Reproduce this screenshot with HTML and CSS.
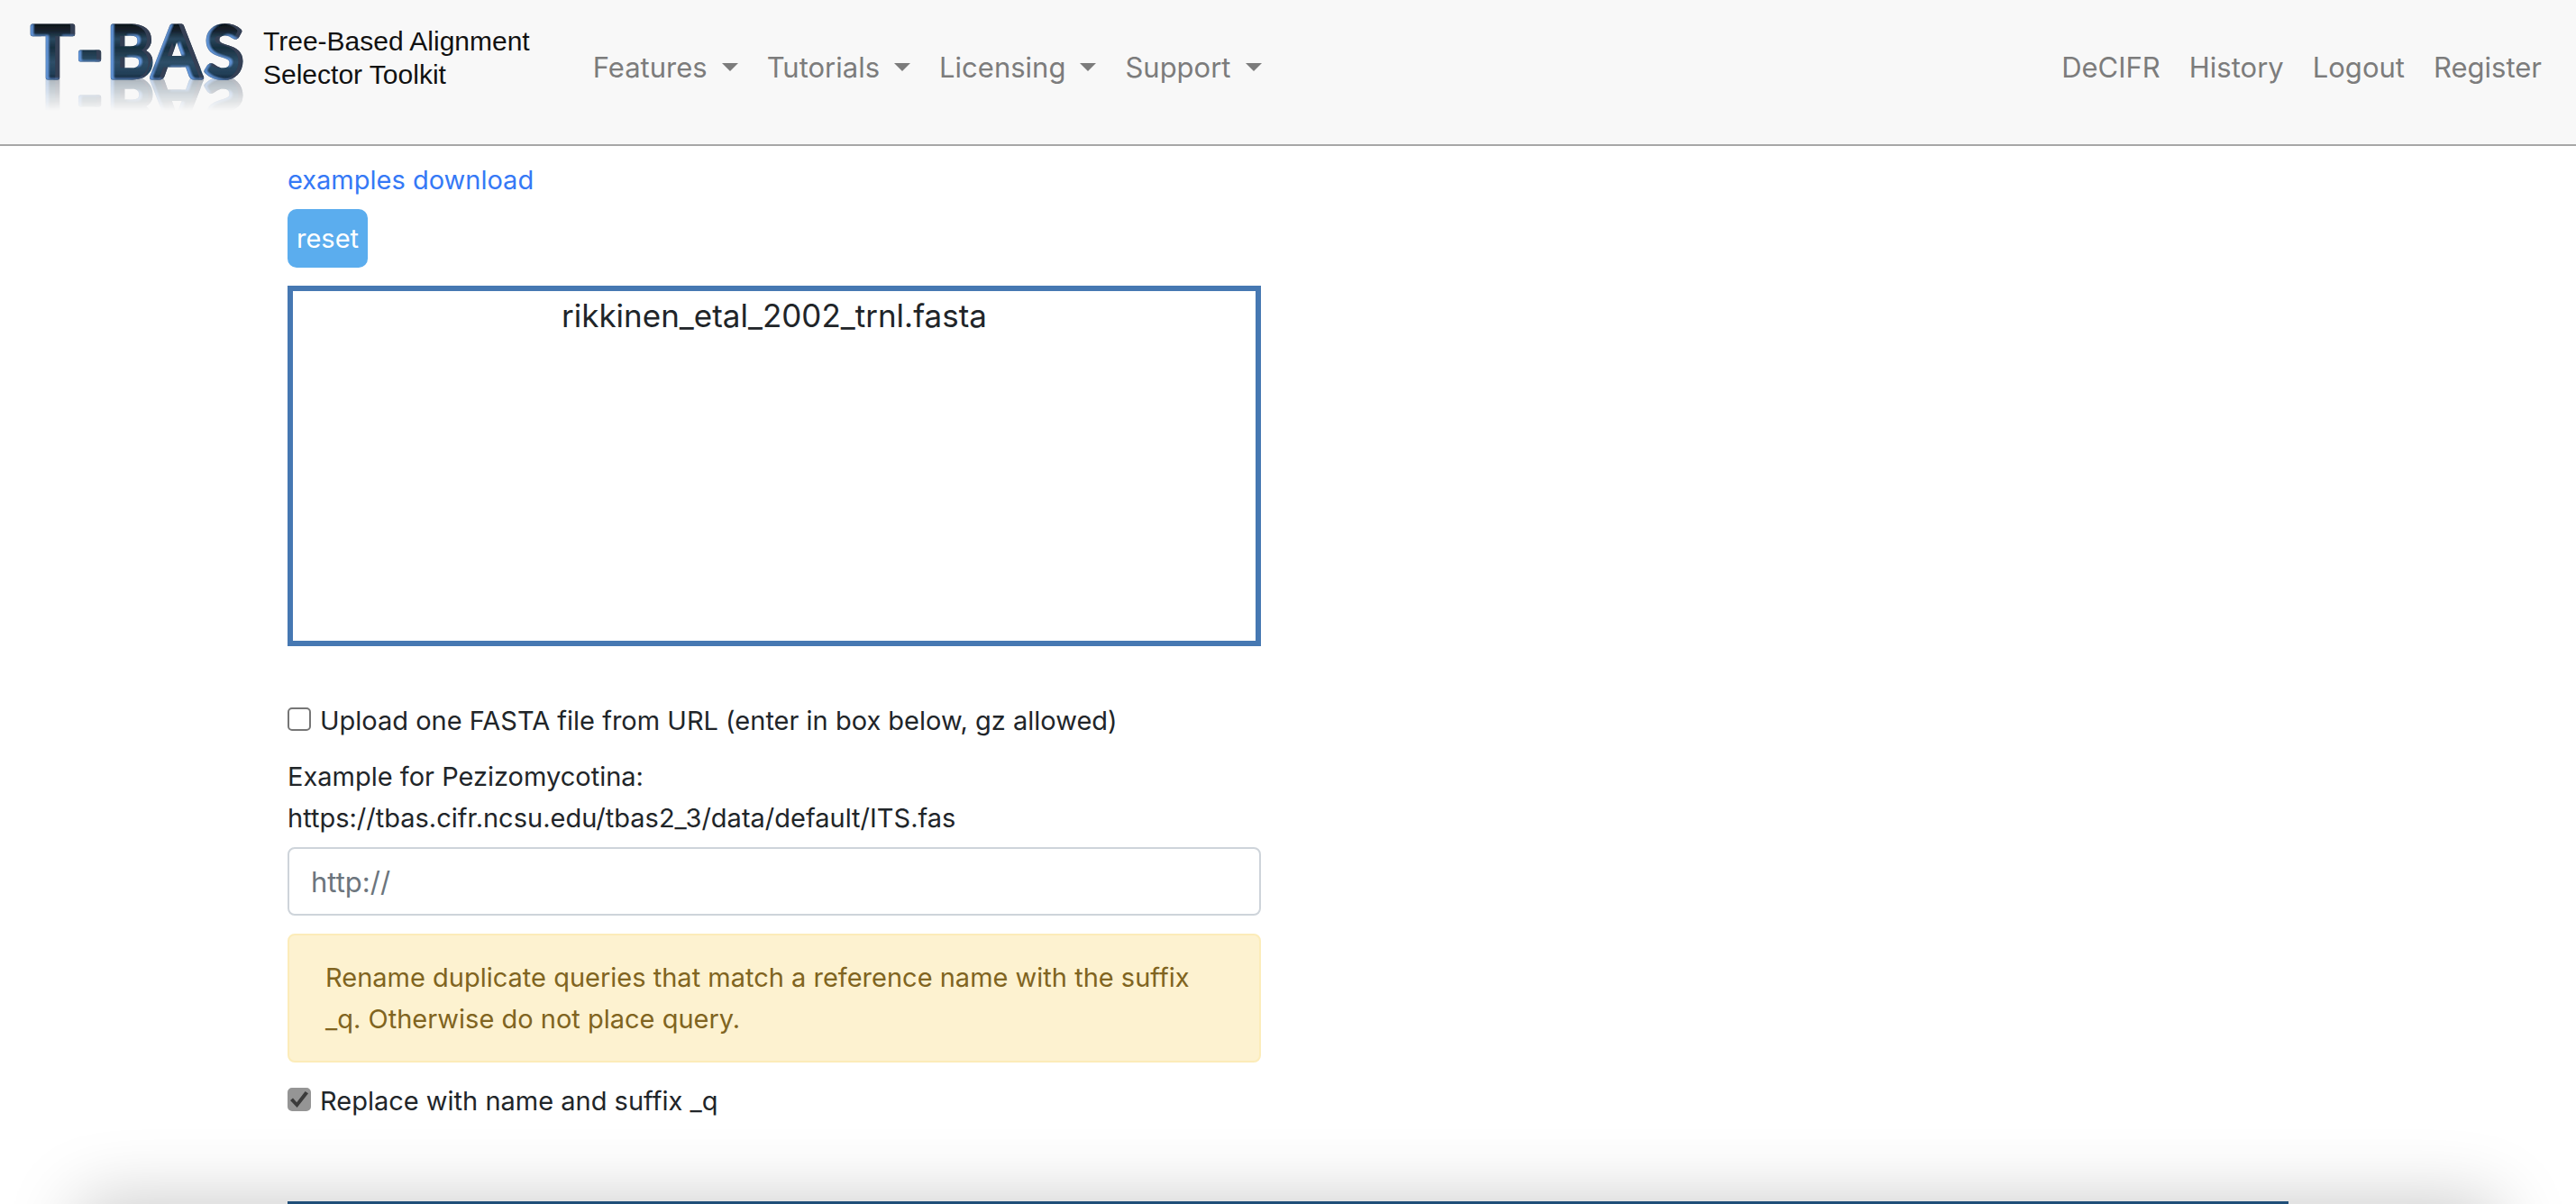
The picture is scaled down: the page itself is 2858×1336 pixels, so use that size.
FILE: index.html
```html
<!DOCTYPE html>
<html lang="en">
<head>
<meta charset="utf-8">
<title>T-BAS</title>
<link rel="stylesheet" href="styles.css">
</head>
<body>
<header class="navbar">
  <a class="brand" href="#">
    <svg class="brand-logo" width="248" height="88" viewBox="0 0 248 88" role="img" aria-label="T-BAS">
      <defs>
        <linearGradient id="steel" x1="0" y1="24" x2="0" y2="88" gradientUnits="userSpaceOnUse">
          <stop offset="0" stop-color="#0e1114"/>
          <stop offset=".16" stop-color="#15222d"/>
          <stop offset=".3" stop-color="#2a4860"/>
          <stop offset=".45" stop-color="#182f40"/>
          <stop offset=".7" stop-color="#2e4f68"/>
          <stop offset=".9" stop-color="#223f58"/>
          <stop offset="1" stop-color="#182a3c"/>
        </linearGradient>
        <filter id="bevel" x="-5%" y="-10%" width="110%" height="120%">
          <feOffset in="SourceAlpha" dx="3" dy="-1" result="r"/>
          <feFlood flood-color="#6aa0e8"/>
          <feComposite in2="SourceAlpha" operator="in"/>
          <feComposite in2="r" operator="out" result="left"/>
          <feOffset in="SourceAlpha" dx="-5" dy="0" result="l"/>
          <feFlood flood-color="#343f54"/>
          <feComposite in2="SourceAlpha" operator="in"/>
          <feComposite in2="l" operator="out" result="right"/>
          <feGaussianBlur in="left" stdDeviation="1"/>
          <feComposite in2="SourceAlpha" operator="in" result="leftSoft"/>
          <feMerge>
            <feMergeNode in="SourceGraphic"/>
            <feMergeNode in="right"/>
            <feMergeNode in="leftSoft"/>
          </feMerge>
        </filter>
      </defs>
      <text class="logo-text" x="7 57 91 141 199" y="86" fill="url(#steel)" stroke="url(#steel)" filter="url(#bevel)">T-BAS</text>
    </svg>
    <span class="brand-name">Tree-Based Alignment<br>Selector Toolkit</span>
  </a>
  <nav class="menu">
    <button class="menu-item dropdown" type="button" aria-haspopup="true">Features</button>
    <button class="menu-item dropdown" type="button" aria-haspopup="true">Tutorials</button>
    <button class="menu-item dropdown" type="button" aria-haspopup="true">Licensing</button>
    <button class="menu-item dropdown" type="button" aria-haspopup="true">Support</button>
  </nav>
  <nav class="menu menu-right">
    <a class="menu-item" href="#">DeCIFR</a>
    <a class="menu-item" href="#">History</a>
    <a class="menu-item" href="#">Logout</a>
    <a class="menu-item" href="#">Register</a>
  </nav>
</header>
<main class="container">
  <form class="upload">
    <a class="examples" href="#">examples download</a>
    <button class="reset" type="button">reset</button>
    <div class="dropzone">rikkinen_etal_2002_trnl.fasta</div>
    <label class="check"><input type="checkbox">Upload one FASTA file from URL (enter in box below, gz allowed)</label>
    <label class="example" for="url">Example for Pezizomycotina:<br>https://tbas.cifr.ncsu.edu/tbas2_3/data/default/ITS.fas</label>
    <input class="url" id="url" type="text" placeholder="http://">
    <p class="alert">Rename duplicate queries that match a reference name with the suffix _q. Otherwise do not place query.</p>
    <label class="check"><input type="checkbox" checked>Replace with name and suffix _q</label>
  </form>
</main>
<footer class="sheet"><div class="container sheet-bar"></div></footer>
</body>
</html>
```
FILE: styles.css
```css
* { box-sizing: border-box; }

body {
  margin: 0;
  overflow-x: hidden;
  background: #fff;
  color: #212529;
  font: 29px/46px Inter, "Liberation Sans", sans-serif;
}

button, input { font: inherit; color: inherit; }
a { text-decoration: none; }

.navbar {
  display: flex;
  align-items: flex-start;
  height: 162px;
  padding: 0 38px 0 28px;
  background: #f8f8f8;
  border-bottom: 2px solid #a7a7a7;
}

.brand {
  display: flex;
  gap: 16px;
  margin-right: 70px;
  color: #111;
}

.brand-logo {
  overflow: visible;
  -webkit-box-reflect: below -2px linear-gradient(to top, rgba(0, 0, 0, .36), rgba(0, 0, 0, .2) 20%, transparent 42%);
}

.logo-text {
  font: 700 78px Lato, sans-serif;
  stroke-width: 5px;
  stroke-linejoin: round;
}

.brand-name {
  padding-top: 27px;
  font: 30px/37px "Liberation Sans", Arial, sans-serif;
  white-space: nowrap;
}

.menu {
  display: flex;
  gap: 32px;
  padding-top: 51px;
}

.menu-right { margin-left: auto; }

.menu-item {
  padding: 0;
  border: 0;
  background: none;
  color: #7c7c7c;
  font-size: 31px;
  line-height: 48px;
}

.dropdown {
  display: flex;
  align-items: center;
  gap: 16px;
}

.dropdown::after {
  content: "";
  margin-bottom: 2px;
  border: 9px solid transparent;
  border-top-color: #7c7c7c;
  border-bottom: 0;
}

.container {
  max-width: 2220px;
  margin: 0 auto;
}

.upload {
  display: flex;
  flex-direction: column;
  align-items: flex-start;
  width: 1080px;
  max-width: 100%;
  padding-top: 15px;
}

.examples { color: #3579f6; }

.reset {
  height: 65px;
  margin: 9px 0 20px;
  padding: 0 10px;
  border: 0;
  border-radius: 10px;
  background: #5badee;
  color: #fff;
}

.dropzone {
  width: 100%;
  height: 400px;
  border: 6px solid #4678b2;
  font-size: 35px;
  line-height: 54px;
  text-align: center;
}

.check {
  display: flex;
  align-items: center;
  gap: 10px;
}

.dropzone + .check { margin: 60px 0 16px; }

.check input {
  appearance: none;
  display: grid;
  place-items: center;
  width: 26px;
  height: 26px;
  margin: 0 0 4px;
  border: 2px solid #767676;
  border-radius: 5px;
  background: #fff;
}

.check input:checked {
  border-color: #959595;
  background: #959595;
}

.check input:checked::after {
  content: "";
  width: 20px;
  height: 18px;
  background: #3b3b3b;
  clip-path: polygon(0 55%, 15% 42%, 36% 68%, 83% 0, 100% 12%, 38% 100%);
}

.url {
  width: 100%;
  height: 76px;
  margin: 9px 0 20px;
  padding: 0 24px;
  border: 2px solid #ced4da;
  border-radius: 8px;
  font-size: 31px;
}

.url::placeholder { color: #6c757d; opacity: 1; }

.alert {
  width: 100%;
  margin: 0 0 20px;
  padding: 24px 40px 23px;
  border: 2px solid #fcecb9;
  border-radius: 8px;
  background: #fdf2d0;
  color: #806420;
}

.sheet {
  margin: 88px 188px 0;
  background: #e3e3e3;
  box-shadow: 0 100px 80px 100px rgba(0, 0, 0, .22);
}

.sheet-bar {
  height: 3px;
  background: #1f4e79;
}
```
